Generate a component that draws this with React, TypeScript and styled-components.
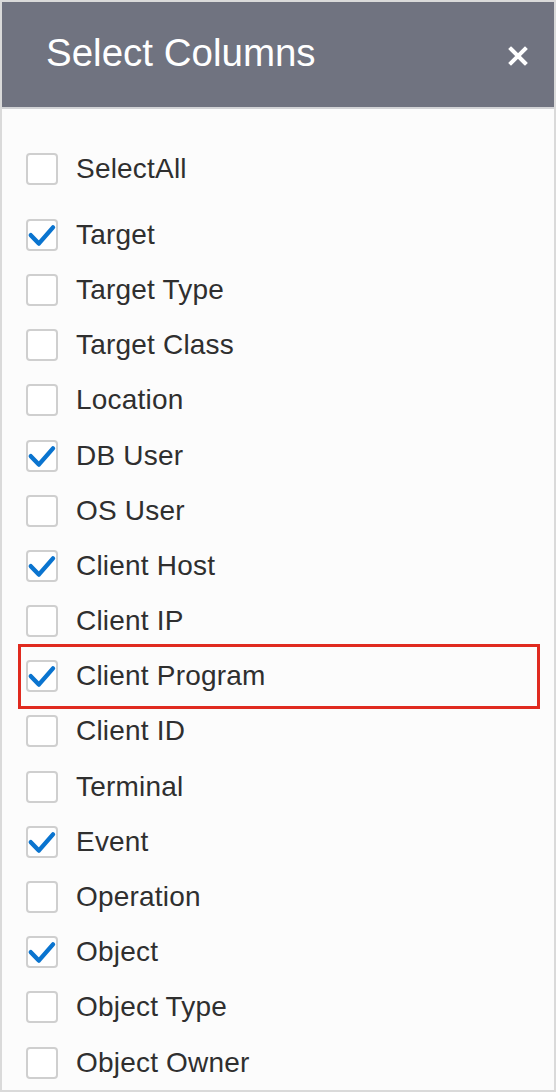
import * as React from 'react'
import { FunctionComponent } from 'react'
import styled, { createGlobalStyle } from 'styled-components'

const GlobalStyle = createGlobalStyle`
  html, body {
    margin: 0;
    padding: 0;
    background: #ffffff;
  }
  body {
    font-family: 'Liberation Sans', Arial, Helvetica, sans-serif;
  }
`

const Panel = styled.div`
  box-sizing: border-box;
  width: 556px;
  height: 1092px;
  border: 2px solid #dadada;
  background: #fcfcfc;
  display: flex;
  flex-direction: column;
  overflow: hidden;
`

const Header = styled.div`
  box-sizing: border-box;
  height: 107px;
  flex: none;
  background: #707380;
  border-bottom: 2px solid #d2d3d6;
  display: flex;
  align-items: center;
  justify-content: space-between;
  padding: 0 24px 4px 44px;
`

const Title = styled.h1`
  margin: 0;
  font-size: 38.5px;
  font-weight: 400;
  color: #ffffff;
  letter-spacing: 0;
`

const CloseButton = styled.button`
  border: none;
  background: none;
  padding: 0;
  width: 24px;
  height: 24px;
  display: flex;
  align-items: center;
  justify-content: center;
  cursor: pointer;
  margin-top: 6px;
`

const List = styled.ul`
  list-style: none;
  margin: 0;
  padding: 32px 19px 0 21px;
`

const Row = styled.li<{ $highlight?: boolean; $spaced?: boolean }>`
  box-sizing: border-box;
  height: 55.2px;
  display: flex;
  align-items: center;
  gap: 18px;
  padding-left: 3px;
  margin-bottom: ${p => (p.$spaced ? '11px' : '0')};
  outline: ${p => (p.$highlight ? '3px solid #e02a1f' : 'none')};
  outline-offset: 2px;
`

const Box = styled.span`
  box-sizing: border-box;
  width: 32px;
  height: 32px;
  flex: none;
  border: 2px solid #cfcfcf;
  border-radius: 4px;
  background: #ffffff;
  display: flex;
  align-items: center;
  justify-content: center;
`

const Label = styled.span`
  font-size: 28px;
  color: #2f2f2f;
  letter-spacing: 0.2px;
`

const CheckMark: FunctionComponent = () => (
  <svg width="32" height="32" viewBox="0 0 32 32" style={{ margin: -2 }}>
    <path
      d="M4.8 16.2 L12.8 24.6 L27 8.4"
      fill="none"
      stroke="#0a74cf"
      strokeWidth="4.4"
      strokeLinecap="round"
      strokeLinejoin="round"
    />
  </svg>
)

type Column = { name: string; checked: boolean; highlight?: boolean }

const columns: Column[] = [
  { name: 'Target', checked: true },
  { name: 'Target Type', checked: false },
  { name: 'Target Class', checked: false },
  { name: 'Location', checked: false },
  { name: 'DB User', checked: true },
  { name: 'OS User', checked: false },
  { name: 'Client Host', checked: true },
  { name: 'Client IP', checked: false },
  { name: 'Client Program', checked: true, highlight: true },
  { name: 'Client ID', checked: false },
  { name: 'Terminal', checked: false },
  { name: 'Event', checked: true },
  { name: 'Operation', checked: false },
  { name: 'Object', checked: true },
  { name: 'Object Type', checked: false },
  { name: 'Object Owner', checked: false },
]

const App: FunctionComponent = () => {
  return (
    <>
      <GlobalStyle />
      <Panel>
        <Header>
          <Title>Select Columns</Title>
          <CloseButton aria-label="Close">
            <svg width="20" height="20" viewBox="0 0 20 20">
              <path
                d="M3 3 L17 17 M17 3 L3 17"
                stroke="#ffffff"
                strokeWidth="4"
                strokeLinecap="square"
              />
            </svg>
          </CloseButton>
        </Header>
        <List>
          <Row $spaced>
            <Box />
            <Label>SelectAll</Label>
          </Row>
          {columns.map(c => (
            <Row key={c.name} $highlight={c.highlight}>
              <Box>{c.checked && <CheckMark />}</Box>
              <Label>{c.name}</Label>
            </Row>
          ))}
        </List>
      </Panel>
    </>
  )
}

export default App
